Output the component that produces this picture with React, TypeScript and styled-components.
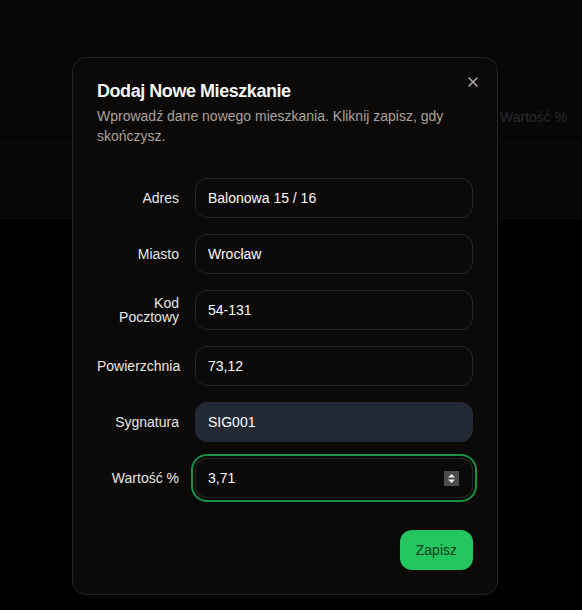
import React from "react";
import styled, { createGlobalStyle } from "styled-components";

const Global = createGlobalStyle`
  html, body { margin: 0; padding: 0; background: #000; }
  body { font-family: "Liberation Sans", Arial, sans-serif; width: 582px; height: 610px; overflow: hidden; }
  * { box-sizing: border-box; }
`;

const Page = styled.div`
  position: relative;
  width: 582px;
  height: 610px;
  background: #000;
`;

const TableCard = styled.div`
  height: 220px;
  background: #070707;
  padding-top: 92px;
`;

const HeaderRow = styled.div`
  display: grid;
  grid-template-columns: 500px 1fr;
  height: 51px;
  align-items: center;
  border-bottom: 1px solid #0e0e0e;
`;

const HeaderCell = styled.div`
  font-size: 14px;
  color: #272a30;
  white-space: nowrap;
`;

const Dialog = styled.div`
  position: absolute;
  left: 72px;
  top: 57px;
  width: 426px;
  background: #0c0a09;
  border: 1px solid #262322;
  border-radius: 14px;
  padding: 24px;
  display: grid;
  gap: 16px;
`;

const CloseButton = styled.button`
  position: absolute;
  right: 16px;
  top: 16px;
  width: 16px;
  height: 16px;
  padding: 0;
  border: 0;
  background: transparent;
  color: #b5b2b0;
  display: flex;
  align-items: center;
  justify-content: center;
`;

const Header = styled.div`
  display: flex;
  flex-direction: column;
  gap: 6px;
`;

const Title = styled.h2`
  margin: 0;
  font-size: 18px;
  line-height: 18px;
  font-weight: 700;
  letter-spacing: -0.025em;
  color: #f5f5f4;
`;

const Description = styled.p`
  margin: 0;
  font-size: 14px;
  line-height: 20px;
  color: #a8a29e;
`;

const Fields = styled.div`
  display: grid;
  gap: 16px;
  padding: 16px 0;
`;

const Row = styled.div`
  display: grid;
  grid-template-columns: repeat(4, minmax(0, 1fr));
  align-items: center;
  gap: 16px;
`;

const Label = styled.label`
  font-size: 14px;
  line-height: 1;
  text-align: right;
  color: #e7e5e4;
`;

const Field = styled.div<{ $filled?: boolean; $focused?: boolean }>`
  grid-column: span 3;
  height: 40px;
  display: flex;
  align-items: center;
  gap: 8px;
  padding: 0 13px 0 12px;
  border-radius: 12px;
  border: 1px solid ${(p) => (p.$filled ? "#232a36" : "#292524")};
  background: ${(p) => (p.$filled ? "#232a36" : "transparent")};
  box-shadow: ${(p) => (p.$focused ? "0 0 0 2px #0c0a09, 0 0 0 4px #1b9145" : "none")};
`;

const Input = styled.input`
  flex: 1;
  min-width: 0;
  border: 0;
  outline: none;
  background: transparent;
  padding: 0;
  font-family: "Liberation Sans", Arial, sans-serif;
  font-size: 14px;
  color: #fafafa;
`;

const Spinner = styled.span`
  width: 15px;
  height: 15px;
  background: #4b4b4b;
  display: flex;
  align-items: center;
  justify-content: center;
`;

const Footer = styled.div`
  display: flex;
  justify-content: flex-end;
`;

const SaveButton = styled.button`
  height: 40px;
  padding: 0 16px;
  border: 0;
  border-radius: 12px;
  background: #22c55e;
  color: #0f3d20;
  font-family: "Liberation Sans", Arial, sans-serif;
  font-size: 14px;
`;

const fields = [
  { label: "Adres", value: "Balonowa 15 / 16" },
  { label: "Miasto", value: "Wrocław" },
  { label: "Kod Pocztowy", value: "54-131" },
  { label: "Powierzchnia", value: "73,12" },
  { label: "Sygnatura", value: "SIG001", filled: true },
  { label: "Wartość %", value: "3,71", focused: true, number: true },
];

export default function App() {
  return (
    <Page>
      <Global />
      <TableCard>
        <HeaderRow>
          <span />
          <HeaderCell>Wartość %</HeaderCell>
        </HeaderRow>
      </TableCard>
      <Dialog role="dialog">
        <Header>
          <Title>Dodaj Nowe Mieszkanie</Title>
          <Description>
            Wprowadź dane nowego mieszkania. Kliknij zapisz, gdy skończysz.
          </Description>
        </Header>
        <Fields>
          {fields.map((f) => (
            <Row key={f.label}>
              <Label>{f.label}</Label>
              <Field $filled={f.filled} $focused={f.focused}>
                <Input readOnly defaultValue={f.value} />
                {f.number && (
                  <Spinner>
                    <svg width="9" height="11" viewBox="0 0 9 11">
                      <path d="M4.5 1 L8 4.5 H1 Z" fill="#f0f0f0" />
                      <path d="M4.5 10 L8 6.5 H1 Z" fill="#f0f0f0" />
                    </svg>
                  </Spinner>
                )}
              </Field>
            </Row>
          ))}
        </Fields>
        <Footer>
          <SaveButton>Zapisz</SaveButton>
        </Footer>
        <CloseButton aria-label="Close">
          <svg width="16" height="16" viewBox="0 0 24 24" fill="none" stroke="currentColor" strokeWidth="2" strokeLinecap="round">
            <path d="M18 6 6 18" />
            <path d="m6 6 12 12" />
          </svg>
        </CloseButton>
      </Dialog>
    </Page>
  );
}
